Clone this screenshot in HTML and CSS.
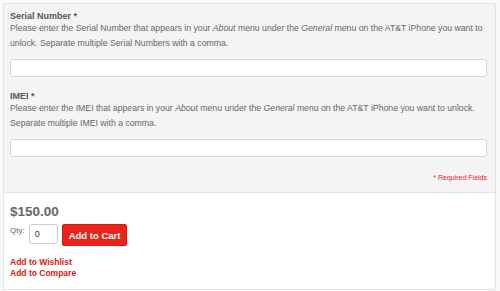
FILE: index.html
```html
<!DOCTYPE html>
<html lang="en">
<head>
    <meta charset="UTF-8">
    <title>Unlock Options</title>
    <link rel="stylesheet" href="styles.css">
</head>
<body>
    <div class="product-box">
        <div class="options">
            <div class="field">
                <label class="field-label">Serial Number *</label>
                <p class="field-note">Please enter the Serial Number that appears in your <em>About</em> menu under the <em>General</em> menu on the AT&amp;T iPhone you want to unlock. Separate multiple Serial Numbers with a comma.</p>
                <input type="text" class="field-input">
            </div>
            <div class="field">
                <label class="field-label">IMEI *</label>
                <p class="field-note">Please enter the IMEI that appears in your <em>About</em> menu under the <em>General</em> menu on the AT&amp;T iPhone you want to unlock. Separate multiple IMEI with a comma.</p>
                <input type="text" class="field-input">
            </div>
            <p class="required">* Required Fields</p>
        </div>

        <div class="buy">
            <div class="price">$150.00</div>
            <div class="qty-row">
                <label class="qty-label">Qty:</label>
                <input type="text" class="qty-input" value="0">
                <button class="add-cart">Add to Cart</button>
            </div>
            <ul class="links">
                <li><a href="#">Add to Wishlist</a></li>
                <li><a href="#">Add to Compare</a></li>
            </ul>
        </div>
    </div>
</body>
</html>
```

FILE: styles.css
```css
* {
    box-sizing: border-box;
    margin: 0;
    padding: 0;
}

body {
    font-family: "Liberation Sans", Arial, sans-serif;
    background: #fafafa;
    padding: 3px;
    width: 499px;
}

.product-box {
    border: 1px solid #e4e4e4;
}

.options {
    background: #f4f4f4;
    padding: 7px 8px 9px 6px;
    border-bottom: 1px solid #e4e4e4;
}

.field {
    margin-bottom: 14px;
}

.field-label {
    display: block;
    font-size: 9px;
    font-weight: bold;
    color: #555;
    line-height: 10px;
}

.field-note {
    font-size: 8.7px;
    color: #666;
    line-height: 15px;
    margin-bottom: 8px;
}

.field-input {
    display: block;
    width: 100%;
    height: 18px;
    border: 1px solid #d6d6d6;
    border-radius: 3px;
    background: #fff;
}

.required {
    text-align: right;
    font-size: 7px;
    color: #e8231c;
    margin-top: 16px;
    line-height: 10px;
}

.buy {
    background: #fff;
    padding: 11px 6px 10px 6px;
}

.price {
    font-size: 13.5px;
    font-weight: bold;
    color: #666;
    line-height: 16px;
}

.qty-row {
    display: flex;
    align-items: flex-start;
    gap: 4px;
    margin-top: 4px;
}

.qty-label {
    font-size: 8px;
    color: #666;
    margin-top: 2px;
}

.qty-input {
    width: 29px;
    height: 20px;
    border: 1px solid #ccc;
    border-radius: 3px;
    font-size: 9px;
    padding-left: 5px;
    color: #333;
}

.add-cart {
    height: 22px;
    padding: 0 6px;
    background: #e8231c;
    color: #fff;
    border: 1px solid #d61a14;
    border-radius: 2px;
    font-family: inherit;
    font-size: 9.5px;
    font-weight: bold;
}

.links {
    list-style: none;
    margin-top: 11px;
    font-size: 8.5px;
    line-height: 11px;
}

.links a {
    font-weight: bold;
    color: #d81c14;
    text-decoration: none;
}
```
